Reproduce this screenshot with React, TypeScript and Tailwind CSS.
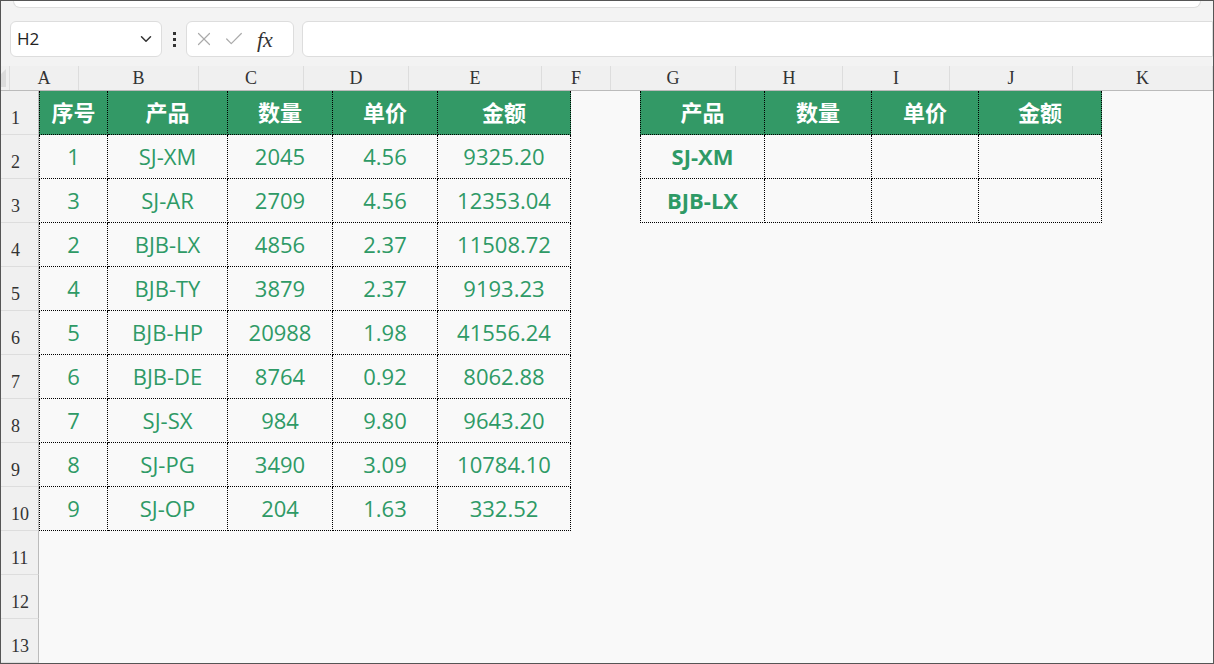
import { ChevronDown, X, Check } from "lucide-react";

const cols = [
  { k: "A", w: 69 },
  { k: "B", w: 120 },
  { k: "C", w: 105 },
  { k: "D", w: 105 },
  { k: "E", w: 133 },
  { k: "F", w: 69 },
  { k: "G", w: 125 },
  { k: "H", w: 107 },
  { k: "I", w: 107 },
  { k: "J", w: 123 },
  { k: "K", w: 140 },
];

const data = [
  ["1", "SJ-XM", "2045", "4.56", "9325.20"],
  ["3", "SJ-AR", "2709", "4.56", "12353.04"],
  ["2", "BJB-LX", "4856", "2.37", "11508.72"],
  ["4", "BJB-TY", "3879", "2.37", "9193.23"],
  ["5", "BJB-HP", "20988", "1.98", "41556.24"],
  ["6", "BJB-DE", "8764", "0.92", "8062.88"],
  ["7", "SJ-SX", "984", "9.80", "9643.20"],
  ["8", "SJ-PG", "3490", "3.09", "10784.10"],
  ["9", "SJ-OP", "204", "1.63", "332.52"],
];

const font = { fontFamily: '"Open Sans","Noto Sans CJK SC",sans-serif' };
const serif = { fontFamily: '"Liberation Serif",serif' };

function cellFor(r: number, c: number) {
  // r: 1-based row, c: column index
  if (r === 1 && c <= 4) {
    return { text: ["序号", "产品", "数量", "单价", "金额"][c], head: true };
  }
  if (r >= 2 && r <= 10 && c <= 4) return { text: data[r - 2][c], body: true };
  if (r === 1 && c >= 6 && c <= 9) return { text: ["产品", "数量", "单价", "金额"][c - 6], head: true };
  if ((r === 2 || r === 3) && c >= 6 && c <= 9)
    return { text: c === 6 ? (r === 2 ? "SJ-XM" : "BJB-LX") : "", body: true, bold: true };
  return null;
}

export default function App() {
  const rows = Array.from({ length: 13 }, (_, i) => i + 1);
  return (
    <div className="w-[1214px] h-[664px] bg-[#f9f9f9] border border-[#555] overflow-hidden flex flex-col" style={font}>
      <div className="h-[12px] bg-[#f3f3f3] px-[12px]">
        <div className="h-[7px] bg-white rounded-b-[8px] border-b border-x border-[#ddd]" />
      </div>
      <div className="h-[56px] flex items-center gap-[8px] pl-[9px] bg-[#f3f3f3]">
        <div className="w-[152px] h-[36px] bg-white border border-[#ddd] rounded-[6px] flex items-center justify-between px-[6px] text-[17px] text-[#222]">
          <span>H2</span>
          <ChevronDown size={18} strokeWidth={2} className="text-[#333]" />
        </div>
        <div className="w-[8px] flex flex-col items-center gap-[3px]">
          <div className="w-[3px] h-[3px] bg-[#333]" />
          <div className="w-[3px] h-[3px] bg-[#333]" />
          <div className="w-[3px] h-[3px] bg-[#333]" />
        </div>
        <div className="w-[108px] h-[36px] bg-white border border-[#ddd] rounded-[6px] flex items-center gap-[8px] px-[6px]">
          <X size={22} strokeWidth={1.3} className="text-[#aaa]" />
          <Check size={22} strokeWidth={1.3} className="text-[#aaa]" />
          <span className="italic text-[22px] text-[#333] ml-[4px]" style={serif}>fx</span>
        </div>
        <div className="flex-1 h-[36px] bg-white border border-[#ddd] rounded-l-[6px]" />
      </div>
      <div className="flex h-[25px] bg-[#f0f0f0] border-b border-[#bbb]">
        <div className="w-[38px] relative border-r border-[#ddd]">
          <div className="absolute right-[3px] bottom-[3px] w-0 h-0 border-l-[18px] border-l-transparent border-b-[18px] border-b-[#dcdcdc]" />
        </div>
        {cols.map((c) => (
          <div key={c.k} style={{ width: c.w, ...serif }} className="shrink-0 border-r border-[#ddd] flex items-center justify-center text-[18px] text-[#333]">
            {c.k}
          </div>
        ))}
      </div>
      {rows.map((r) => (
        <div key={r} className="flex h-[44px] shrink-0">
          <div className="w-[38px] shrink-0 bg-[#f0f0f0] border-r border-[#bbb] border-b border-b-[#ddd] flex items-end pl-[10px] pb-[2px] text-[18px] text-[#333]" style={serif}>
            {r}
          </div>
          {cols.map((c, ci) => {
            const cell = cellFor(r, ci);
            if (!cell)
              return <div key={c.k} style={{ width: c.w }} className="shrink-0" />;
            return (
              <div
                key={c.k}
                style={{ width: c.w }}
                className={`shrink-0 flex items-center justify-center border-r border-b border-dotted border-black ${
                  ci === 0 || ci === 6 ? "border-l" : ""
                } ${cell.head ? "bg-[#339966] text-white font-bold text-[22px]" : "text-[#2e9a66] text-[22px]"} ${
                  cell.bold ? "font-bold" : ""
                }`}
              >
                {cell.text}
              </div>
            );
          })}
        </div>
      ))}
    </div>
  );
}
